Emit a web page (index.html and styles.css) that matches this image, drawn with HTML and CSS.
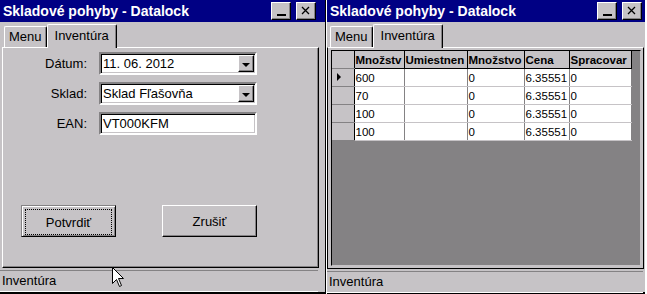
FILE: index.html
```html
<!DOCTYPE html>
<html lang="sk">
<head>
    <meta charset="UTF-8">
    <title>Skladové pohyby - Datalock</title>
    <link rel="stylesheet" href="styles.css">
</head>
<body>
<div class="screens">
    <!-- Ľavá obrazovka: formulár -->
    <div class="device device-left">
        <div class="titlebar">
            <span class="title">Skladové pohyby - Datalock</span>
            <span class="tb-btn tb-min"></span>
            <span class="tb-btn">
                <svg width="18" height="16" viewBox="0 0 18 16"><path d="M5 4 L12 11 M12 4 L5 11" stroke="#000" stroke-width="1.3" fill="none"/></svg>
            </span>
        </div>
        <div class="tabs">
            <div class="tab">Menu</div>
            <div class="tab active">Inventúra</div>
        </div>
        <div class="panel">
            <div class="form">
                <label class="form-label">Dátum:</label>
                <div class="combo"><span class="combo-text">11. 06. 2012</span><span class="combo-btn"></span></div>
                <label class="form-label">Sklad:</label>
                <div class="combo"><span class="combo-text">Sklad Fľašovňa</span><span class="combo-btn"></span></div>
                <label class="form-label">EAN:</label>
                <div class="combo"><span class="combo-text">VT000KFM</span></div>
            </div>
            <div class="actions">
                <button class="btn btn-default"><span class="btn-focus">Potvrdiť</span></button>
                <button class="btn">Zrušiť</button>
            </div>
        </div>
        <div class="statusbar">Inventúra</div>
        <svg class="cursor" width="13" height="21" viewBox="0 0 13 21"><path d="M0.5 0.5 L0.5 16.5 L4.5 12.5 L7.5 19.5 L9.5 18.5 L6.5 11.5 L11.5 11.5 Z" fill="#fff" stroke="#000" stroke-width="1"/></svg>
    </div>

    <!-- Pravá obrazovka: mriežka -->
    <div class="device device-right">
        <div class="titlebar">
            <span class="title">Skladové pohyby - Datalock</span>
            <span class="tb-btn tb-min"></span>
            <span class="tb-btn">
                <svg width="18" height="16" viewBox="0 0 18 16"><path d="M5 4 L12 11 M12 4 L5 11" stroke="#000" stroke-width="1.3" fill="none"/></svg>
            </span>
        </div>
        <div class="tabs">
            <div class="tab">Menu</div>
            <div class="tab active">Inventúra</div>
        </div>
        <div class="panel panel-grid">
            <div class="grid">
                <table class="grid-table">
                    <colgroup>
                        <col class="c-row"><col class="c-1"><col class="c-2"><col class="c-3"><col class="c-4"><col class="c-5">
                    </colgroup>
                    <tr>
                        <th class="row-head"></th>
                        <th>Množstv</th>
                        <th>Umiestnen</th>
                        <th>Množstvo</th>
                        <th>Cena</th>
                        <th>Spracovar</th>
                    </tr>
                    <tr>
                        <td class="row-head current"></td>
                        <td>600</td><td></td><td>0</td><td>6.35551</td><td>0</td>
                    </tr>
                    <tr>
                        <td class="row-head"></td>
                        <td>70</td><td></td><td>0</td><td>6.35551</td><td>0</td>
                    </tr>
                    <tr>
                        <td class="row-head"></td>
                        <td>100</td><td></td><td>0</td><td>6.35551</td><td>0</td>
                    </tr>
                    <tr>
                        <td class="row-head"></td>
                        <td>100</td><td></td><td>0</td><td>6.35551</td><td>0</td>
                    </tr>
                </table>
            </div>
        </div>
        <div class="statusbar">Inventúra</div>
    </div>
</div>
</body>
</html>
```

FILE: styles.css
```css
body {
    margin: 0;
    background: #fff;
    font-family: "Liberation Sans", Arial, sans-serif;
    font-size: 13px;
    color: #000;
}
.screens {
    display: flex;
    height: 294px;
}
.device {
    position: relative;
    display: flex;
    flex-direction: column;
    background: #c6c3c6;
    height: 292px;
    border-bottom: 2px solid #000;
}
.device-left {
    width: 325px;
    border-right: 1px solid #000;
}
.device-right {
    width: 318px;
    margin-left: 1px;
}

/* Titulný pruh */
.titlebar {
    height: 22px;
    background: #000084;
    color: #fff;
    display: flex;
    align-items: center;
    padding: 0 9px 0 3px;
    flex-shrink: 0;
}
.device-right .titlebar {
    padding-right: 3px;
}
.title {
    font-weight: bold;
    font-size: 14px;
    flex: 1;
    white-space: nowrap;
}
.tb-btn {
    position: relative;
    width: 18px;
    height: 16px;
    margin-left: 5px;
    background: #c6c3c6;
    border: 1px solid;
    border-color: #fff #000 #000 #fff;
    box-shadow: inset -1px -1px #848284;
    display: flex;
    align-items: center;
    justify-content: center;
}
.tb-min::after {
    content: "";
    position: absolute;
    left: 5px;
    bottom: 3px;
    width: 9px;
    height: 2px;
    background: #000;
}

/* Záložky */
.tabs {
    height: 25px;
    display: flex;
    align-items: flex-end;
    padding-left: 4px;
    flex-shrink: 0;
}
.device-right .tabs {
    padding-left: 3px;
}
.tab {
    height: 20px;
    line-height: 20px;
    padding: 0 4px;
    border: 1px solid;
    border-color: #fff #000 transparent #fff;
    border-bottom: none;
    border-radius: 2px 2px 0 0;
    box-shadow: inset -1px 0 #848284;
}
.tab.active {
    position: relative;
    z-index: 1;
    height: 23px;
    line-height: 21px;
    margin-bottom: -1px;
    padding: 0 7px 0 7px;
    background: #c6c3c6;
}

/* Panel so záložkou */
.panel {
    height: 219px;
    margin: 0 6px 0 2px;
    border: 1px solid;
    border-color: #fff #000 #000 #fff;
    box-shadow: inset -1px -1px #848284;
    flex-shrink: 0;
}
.form {
    display: grid;
    grid-template-columns: 84px 158px;
    grid-auto-rows: 23px;
    column-gap: 12px;
    row-gap: 7px;
    padding-top: 4px;
}
.form-label {
    text-align: right;
    line-height: 23px;
}
.combo {
    display: flex;
    background: #fff;
    border: 2px solid;
    border-color: #848284 #fff #fff #848284;
    box-shadow: inset 1px 1px #000, inset -1px -1px #c6c3c6;
}
.combo-text {
    flex: 1;
    line-height: 19px;
    padding-left: 2px;
}
.combo-btn {
    position: relative;
    width: 14px;
    margin: 1px 1px 1px 0;
    background: #c6c3c6;
    border: 1px solid;
    border-color: #fff #000 #000 #fff;
    box-shadow: inset -1px -1px #848284;
}
.combo-btn::after {
    content: "";
    position: absolute;
    left: 3px;
    top: 7px;
    border-left: 4px solid transparent;
    border-right: 4px solid transparent;
    border-top: 4px solid #000;
}

/* Tlačidlá */
.actions {
    display: flex;
    gap: 46px;
    margin-top: 70px;
    padding-left: 18px;
}
.btn {
    width: 95px;
    height: 32px;
    padding: 0;
    font-family: inherit;
    font-size: 13px;
    background: #c6c3c6;
    border: 1px solid;
    border-color: #fff #000 #000 #fff;
    box-shadow: inset -1px -1px #848284;
}
.btn-default {
    border-color: #848284 #000 #000 #848284;
    box-shadow: inset 1px 1px #fff, inset -1px -1px #848284;
}
.btn-focus {
    display: flex;
    align-items: center;
    justify-content: center;
    margin: 3px;
    height: 24px;
    border: 1px dotted #000;
}

/* Stavový riadok */
.statusbar {
    margin-top: 2px;
    height: 20px;
    line-height: 20px;
    width: 316px;
    padding-left: 2px;
    border-top: 1px solid #848284;
    border-bottom: 1px solid #fff;
}
.device-right .statusbar {
    width: 314px;
}

/* Mriežka */
.panel-grid {
    height: 216px;
    margin: 0 1px 0 0;
    padding: 2px 2px 2px 3px;
    border-color: #fff #000 #000 #000;
    box-shadow: none;
}
.grid {
    height: 214px;
    background: #848284;
    border: 1px solid;
    border-color: #000 #c6c3c6 #c6c3c6 #000;
}
.grid-table {
    border-collapse: collapse;
    table-layout: fixed;
    width: 299px;
    font-size: 11.5px;
}
.c-row { width: 22px; }
.c-1 { width: 50px; }
.c-2 { width: 63px; }
.c-3 { width: 57px; }
.c-4 { width: 45px; }
.c-5 { width: 62px; }
.grid-table th,
.grid-table td {
    height: 17px;
    padding: 0 0 0 1px;
    white-space: nowrap;
    overflow: hidden;
    text-align: left;
}
.grid-table th {
    background: #c6c3c6;
    font-weight: bold;
    border-right: 1px solid #000;
    border-bottom: 1px solid #000;
}
.grid-table td {
    background: #fff;
    font-size: 11.5px;
    border-right: 1px solid #848284;
    border-bottom: 1px solid #c6c3c6;
}
.grid-table .row-head {
    position: relative;
    background: #c6c3c6;
    border-right: 1px solid #000;
    border-bottom: 1px solid #848284;
}
.row-head.current::after {
    content: "";
    position: absolute;
    left: 5px;
    top: 4px;
    border-top: 4px solid transparent;
    border-bottom: 4px solid transparent;
    border-left: 4px solid #000;
}

.cursor {
    position: absolute;
    left: 112px;
    top: 267px;
}
```
